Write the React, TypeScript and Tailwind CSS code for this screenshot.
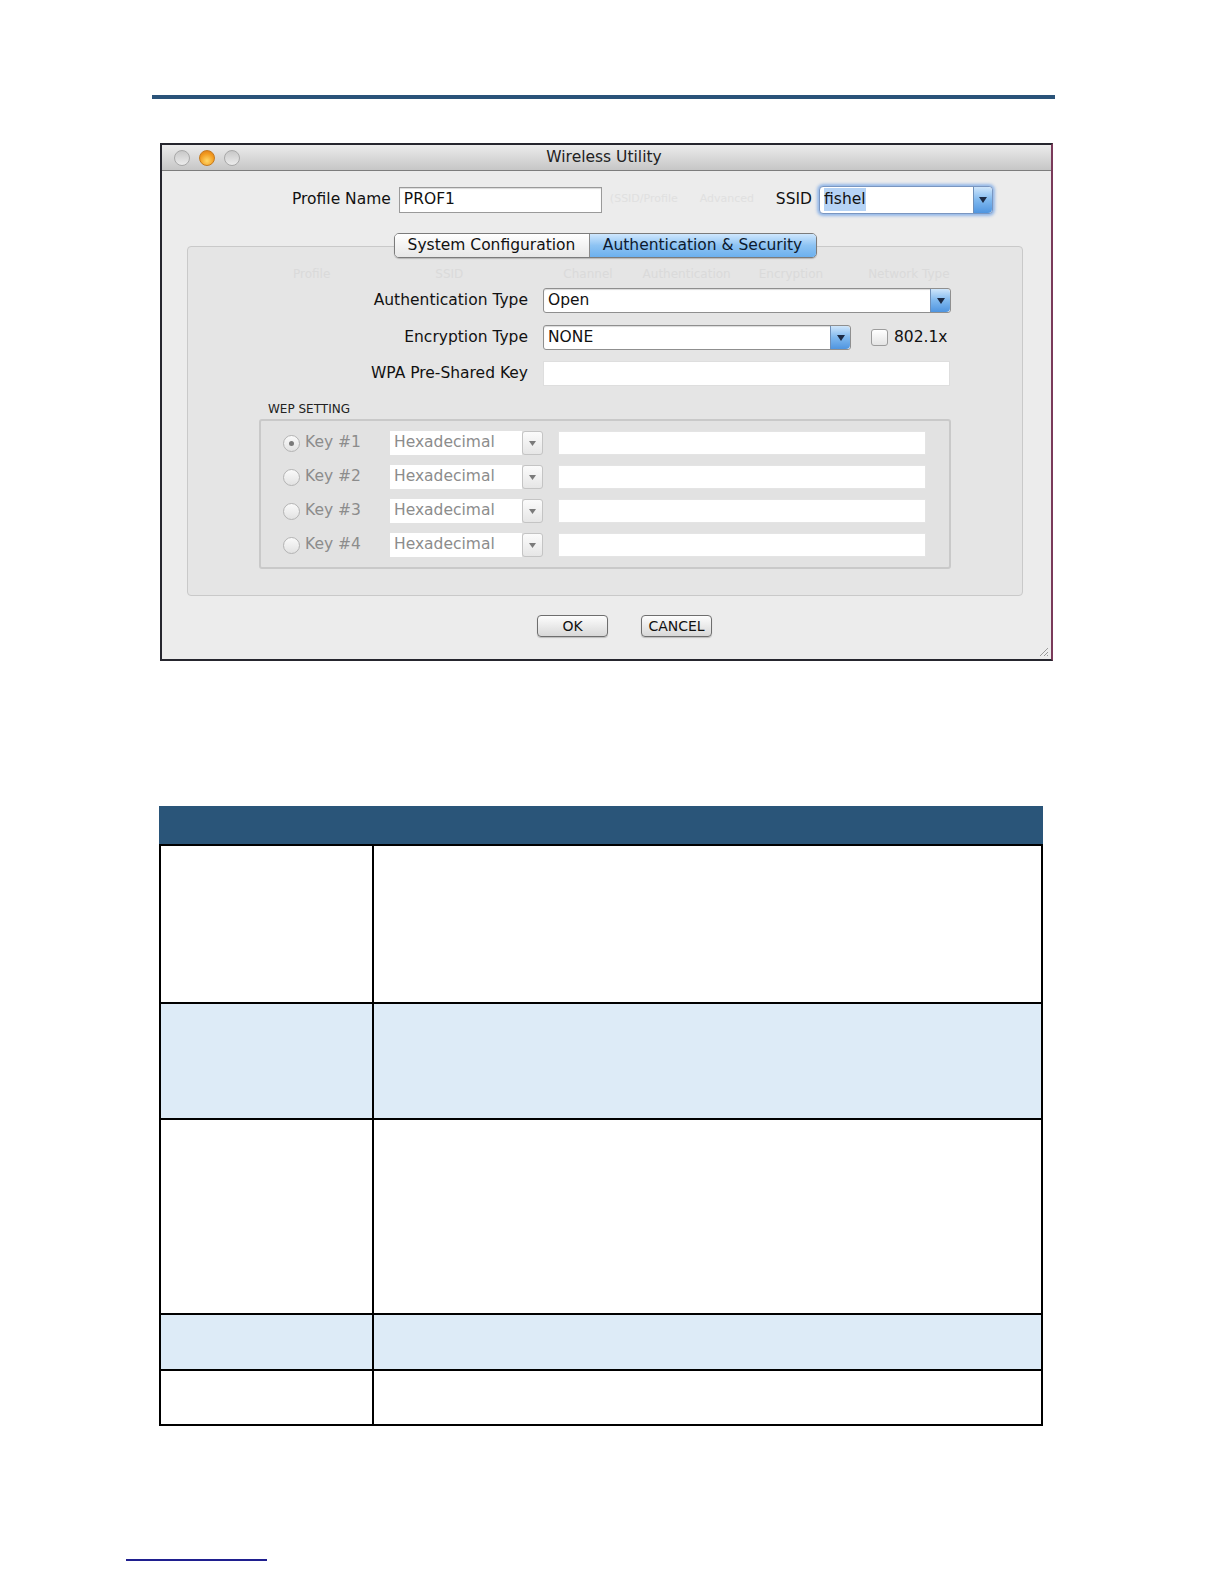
import React from "react";

const F = { fontFamily: '"DejaVu Sans", "Liberation Sans", sans-serif' };

function BlueArrow({ w = 20 }: { w?: number }) {
  return (
    <div
      className="h-full flex items-center justify-center rounded-r-[4px] border-l border-[#6e8fb8] bg-gradient-to-b from-[#cfe6fb] via-[#7fb8ee] to-[#4f95e0]"
      style={{ width: w }}
    >
      <svg width="8" height="6" viewBox="0 0 8 6">
        <path d="M0 0 L8 0 L4 6 Z" fill="#1c2a44" />
      </svg>
    </div>
  );
}

function BlueSelect({ text, w }: { text: string; w: number }) {
  return (
    <div
      className="h-[25px] flex items-stretch bg-white border border-[#8f8f8f] rounded-[3px] shadow-[inset_0_1px_1px_rgba(0,0,0,0.15)]"
      style={{ width: w }}
    >
      <div className="flex-1 flex items-center pl-[4px] text-[15.5px] text-[#111]">{text}</div>
      <BlueArrow />
    </div>
  );
}

function WepRow({ n, checked }: { n: number; checked?: boolean }) {
  return (
    <div className="flex items-center h-[24px]">
      <div className="ml-[22px] w-[17px] h-[17px] rounded-full border border-[#b4b4b4] bg-gradient-to-b from-[#fafafa] to-[#e2e2e2] flex items-center justify-center">
        {checked && <div className="w-[5px] h-[5px] rounded-full bg-[#7a7a7a]" />}
      </div>
      <div className="ml-[5px] w-[85px] text-[15.5px] text-[#8c8c8c]">Key #{n}</div>
      <div className="w-[153px] h-[24px] flex items-stretch">
        <div className="flex-1 bg-white flex items-center pl-[4px] text-[15.5px] text-[#8c8c8c]">Hexadecimal</div>
        <div className="w-[21px] border border-[#c4c4c4] rounded-[3px] bg-gradient-to-b from-[#fbfbfb] to-[#e6e6e6] flex items-center justify-center">
          <svg width="7" height="5" viewBox="0 0 7 5">
            <path d="M0 0 L7 0 L3.5 5 Z" fill="#7a7a7a" />
          </svg>
        </div>
      </div>
      <div className="ml-[15px] w-[368px] h-[24px] bg-white border border-[#e4e4e4]" />
    </div>
  );
}

function Dialog() {
  return (
    <div className="ml-[160px] mt-[44px] w-[893px] h-[518px] border-2 border-[#26262e] border-r-[#7a3a5a] bg-[#ececec] flex flex-col" style={F}>
      <div className="h-[26px] flex items-center bg-gradient-to-b from-[#ececec] to-[#c6c6c6] border-b border-[#7d7d7d]">
        <div className="flex items-center gap-[9px] pl-[12px]">
          <div className="w-[16px] h-[16px] rounded-full border border-[#a8a8a8] bg-gradient-to-b from-[#c8c8c8] to-[#ececec]" />
          <div className="w-[16px] h-[16px] rounded-full border border-[#c47a1e] bg-[radial-gradient(circle_at_50%_70%,#ffd86a,#f29a1e_60%,#d9741a)]" />
          <div className="w-[16px] h-[16px] rounded-full border border-[#a8a8a8] bg-gradient-to-b from-[#c8c8c8] to-[#ececec]" />
        </div>
        <div className="flex-1 text-center text-[15.5px] text-[#222] pr-[83px]">Wireless Utility</div>
      </div>

      <div className="flex items-center mt-[15px] h-[27px]">
        <div className="ml-[130px] text-[15.5px] text-[#111]">Profile Name</div>
        <div className="ml-[8px] w-[203px] h-[26px] bg-white border border-[#9a9a9a] shadow-[inset_0_1px_1px_rgba(0,0,0,0.15)] flex items-center pl-[4px] text-[15.5px] text-[#111]">PROF1</div>
        <div className="ml-[8px] w-[164px] flex gap-[22px] text-[11px] text-[#e0e0e0] overflow-hidden">
          <span>(SSID/Profile</span>
          <span>Advanced</span>
        </div>
        <div className="ml-[2px] text-[15.5px] text-[#111]">SSID</div>
        <div className="ml-[7px] w-[174px] h-[28px] flex items-stretch bg-white border border-[#7a96c0] rounded-[4px] shadow-[0_0_3px_2px_rgba(90,150,230,0.6)]">
          <div className="flex-1 flex items-center pl-[4px] text-[15.5px] text-[#111]">
            <span className="bg-[#b6d3f5]">fishel</span>
          </div>
          <BlueArrow w={19} />
        </div>
      </div>

      <div className="ml-[25px] mt-[20px] w-[836px] flex flex-col">
        <div className="flex justify-center relative z-10 -mb-[12px]">
          <div className="flex h-[25px] border border-[#7b7b7b] rounded-[5px] overflow-hidden shadow-[0_1px_1px_rgba(0,0,0,0.2)]">
            <div className="w-[195px] flex items-center justify-center bg-gradient-to-b from-[#ffffff] to-[#e7e7e7] text-[15.5px] text-[#111] border-r border-[#8a8a8a]">System Configuration</div>
            <div className="w-[226px] flex items-center justify-center bg-gradient-to-b from-[#cfe7fd] via-[#8dc3f3] to-[#6cb0ee] text-[15.5px] text-[#0d1a2e]">Authentication &amp; Security</div>
          </div>
        </div>
        <div className="h-[350px] border border-[#c9c9c9] rounded-[4px] bg-[#e5e5e5] flex flex-col">
          <div className="mt-[18px] h-[16px] flex text-[12px] text-[#dadada]">
            <span className="ml-[105px]">Profile</span>
            <span className="ml-[105px]">SSID</span>
            <span className="ml-[100px]">Channel</span>
            <span className="ml-[30px]">Authentication</span>
            <span className="ml-[28px]">Encryption</span>
            <span className="ml-[45px]">Network Type</span>
          </div>
          <div className="mt-[7px] flex items-center h-[25px]">
            <div className="w-[340px] text-right text-[15.5px] text-[#111]">Authentication Type</div>
            <div className="ml-[15px]"><BlueSelect text="Open" w={408} /></div>
          </div>
          <div className="mt-[12px] flex items-center h-[25px]">
            <div className="w-[340px] text-right text-[15.5px] text-[#111]">Encryption Type</div>
            <div className="ml-[15px]"><BlueSelect text="NONE" w={308} /></div>
            <div className="ml-[20px] w-[17px] h-[17px] border border-[#9c9c9c] rounded-[3px] bg-gradient-to-b from-[#ffffff] to-[#e4e4e4]" />
            <div className="ml-[6px] text-[15.5px] text-[#111]">802.1x</div>
          </div>
          <div className="mt-[11px] flex items-center h-[25px]">
            <div className="w-[340px] text-right text-[15.5px] text-[#111]">WPA Pre-Shared Key</div>
            <div className="ml-[15px] w-[407px] h-[25px] bg-white border border-[#dedede]" />
          </div>
          <div className="mt-[16px] ml-[80px] text-[12px] text-[#222] h-[15px] leading-[15px]">WEP SETTING</div>
          <div className="ml-[71px] mt-[2px] w-[692px] h-[150px] border-2 border-[#c9c9c9] rounded-[3px] bg-[#e2e2e2] flex flex-col gap-[10px] pt-[10px]">
            <WepRow n={1} checked />
            <WepRow n={2} />
            <WepRow n={3} />
            <WepRow n={4} />
          </div>
        </div>
      </div>

      <div className="flex mt-[19px] ml-[375px] gap-[33px]">
        <div className="w-[71px] h-[22px] border border-[#6e6e6e] rounded-[4px] bg-gradient-to-b from-[#fdfdfd] to-[#d8d8d8] flex items-center justify-center text-[14px] text-[#111] shadow-[0_1px_1px_rgba(0,0,0,0.2)]">OK</div>
        <div className="w-[71px] h-[22px] border border-[#6e6e6e] rounded-[4px] bg-gradient-to-b from-[#fdfdfd] to-[#d8d8d8] flex items-center justify-center text-[14px] text-[#111] shadow-[0_1px_1px_rgba(0,0,0,0.2)]">CANCEL</div>
      </div>
      <div className="flex-1 flex items-end justify-end pr-[2px] pb-[2px]">
        <svg width="12" height="12" viewBox="0 0 12 12">
          <path d="M11 3 L3 11 M11 7 L7 11 M11 10 L10 11" stroke="#9a9a9a" strokeWidth="1" />
        </svg>
      </div>
    </div>
  );
}

function Row({ h, blue }: { h: number; blue?: boolean }) {
  return (
    <div className={`flex border-b-2 border-black ${blue ? "bg-[#ddebf7]" : "bg-white"}`} style={{ height: h }}>
      <div className="w-[213px] border-r-2 border-black" />
      <div className="flex-1" />
    </div>
  );
}

export default function App() {
  return (
    <div className="w-full min-h-screen bg-white flex flex-col overflow-hidden">
      <div className="mt-[95px] ml-[152px] w-[903px] h-[4px] bg-[#2a5379]" />
      <Dialog />
      <div className="ml-[159px] mt-[145px] w-[884px] flex flex-col">
        <div className="h-[38px] bg-[#2a5579]" />
        <div className="border-l-2 border-r-2 border-t-2 border-black flex flex-col">
          <Row h={158} />
          <Row h={116} blue />
          <Row h={195} />
          <Row h={56} blue />
          <Row h={55} />
        </div>
      </div>
      <div className="ml-[126px] mt-[133px] w-[141px] h-[2px] bg-[#1f1f8f]" />
    </div>
  );
}
